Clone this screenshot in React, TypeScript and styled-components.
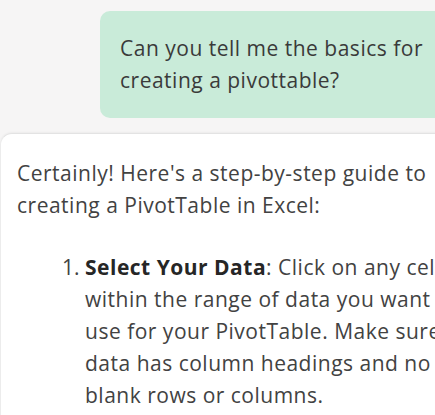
import React, { FC } from 'react';
import styled, { createGlobalStyle } from 'styled-components';

const GlobalStyle = createGlobalStyle`
	html, body {
		margin: 0;
		padding: 0;
		background: #f6f5f5;
		overflow: hidden;
	}
	body {
		font-family: 'Open Sans', 'Noto Sans', sans-serif;
	}
`;

const Page = styled.div`
	width: 435px;
	height: 415px;
	overflow: hidden;
	display: flex;
	flex-direction: column;
	gap: 15px;
	padding-top: 11px;
	box-sizing: border-box;
`;

const UserRow = styled.div`
	display: flex;
	padding-left: 100px;
`;

const UserBubble = styled.div`
	flex: 1;
	margin-right: -60px;
	background: #c9ebd9;
	border-radius: 10px;
	padding: 21px 20px 22px 20px;
	color: #3a3a3a;
`;

const BotCard = styled.div`
	flex: 1;
	margin-right: -60px;
	background: #ffffff;
	border-top: 1px solid #e3e3e3;
	border-left: 1px solid #ececec;
	border-top-left-radius: 12px;
	box-shadow: 0 -1px 2px rgba(0, 0, 0, 0.04);
	padding: 23px 0 0 16px;
	color: #424242;
	display: flex;
	flex-direction: column;
	gap: 30px;
`;

const Lines = styled.p`
	margin: 0;
	font-size: 21px;
	line-height: 32px;
	white-space: nowrap;
	letter-spacing: 0.5px;
`;

const ListItem = styled.div`
	display: flex;
	padding-left: 45px;
`;

const Marker = styled.span`
	width: 23px;
	flex: none;
	font-size: 21px;
	line-height: 32px;
`;

const Strong = styled.b`
	font-weight: 700;
	color: #262626;
`;

const Step: FC<{ n: number; children: React.ReactNode }> = ({ n, children }) => (
	<ListItem>
		<Marker>{n}.</Marker>
		<Lines>{children}</Lines>
	</ListItem>
);

const App: FC = () => (
	<>
		<GlobalStyle />
		<Page>
			<UserRow>
				<UserBubble>
					<Lines>
						Can you tell me the basics for
						<br />
						creating a pivottable?
					</Lines>
				</UserBubble>
			</UserRow>
			<BotCard>
				<Lines>
					Certainly! Here's a step-by-step guide to
					<br />
					creating a PivotTable in Excel:
				</Lines>
				<Step n={1}>
					<Strong>Select Your Data</Strong>: Click on any cell
					<br />
					within the range of data you want to
					<br />
					use for your PivotTable. Make sure your
					<br />
					data has column headings and no
					<br />
					blank rows or columns.
				</Step>
			</BotCard>
		</Page>
	</>
);

export default App;
